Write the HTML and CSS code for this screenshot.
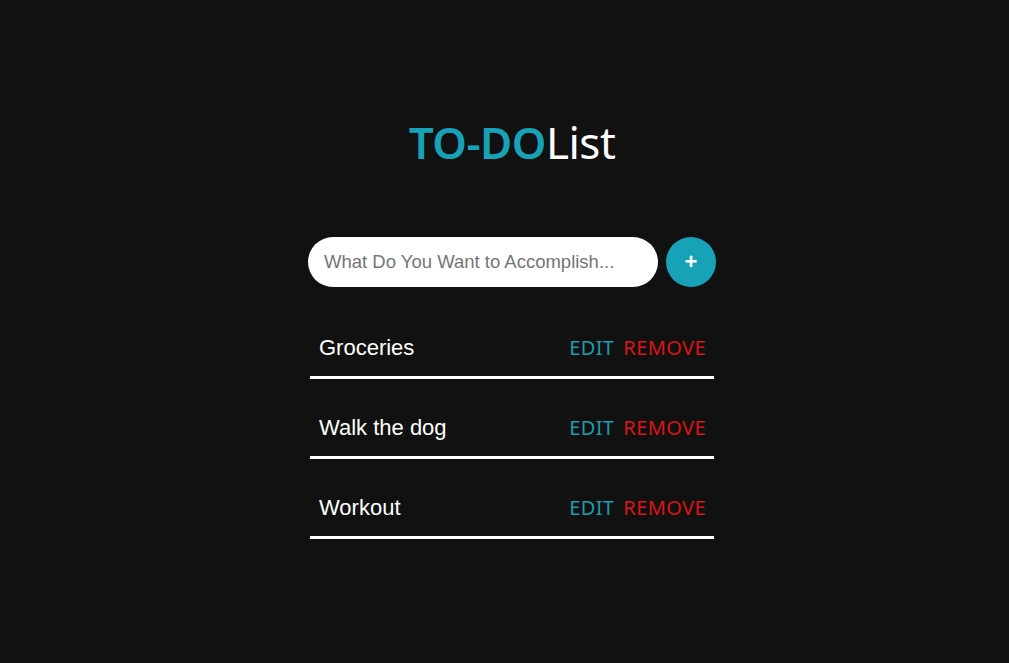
FILE: index.html
```html
<!DOCTYPE html>
<html>
<head>
<meta charset="utf-8">
<link rel="stylesheet" href="styles.css">
</head>
<body>
<div class="app">
  <h1 class="title"><span class="accent">TO-DO</span>List</h1>
  <form class="add-form">
    <input class="add-input" type="text" placeholder="What Do You Want to Accomplish...">
    <button class="add-btn" type="button">+</button>
  </form>
  <ul class="list">
    <li class="item"><span class="item-text">Groceries</span><span class="actions"><span class="edit">EDIT</span><span class="remove">REMOVE</span></span></li>
    <li class="item"><span class="item-text">Walk the dog</span><span class="actions"><span class="edit">EDIT</span><span class="remove">REMOVE</span></span></li>
    <li class="item"><span class="item-text">Workout</span><span class="actions"><span class="edit">EDIT</span><span class="remove">REMOVE</span></span></li>
  </ul>
</div>
</body>
</html>
```
FILE: styles.css
```css
html, body {
  margin: 0;
  background: #111111;
  height: 100%;
}
body {
  padding-left: 15px;
  box-sizing: border-box;
  font-family: "Noto Sans", "Open Sans", sans-serif;
}
.app {
  width: 408px;
  margin: 0 auto;
  display: flex;
  flex-direction: column;
  align-items: center;
}
.title {
  margin: 112px 0 0;
  font-size: 44px;
  font-weight: 400;
  line-height: 60px;
  color: #ffffff;
  letter-spacing: -0.5px;
}
.accent {
  color: #17a2b8;
  font-weight: 600;
}
.add-form {
  margin-top: 65px;
  display: flex;
  gap: 8px;
  width: 408px;
}
.add-input {
  width: 350px;
  height: 50px;
  box-sizing: border-box;
  border: none;
  border-radius: 25px;
  padding: 0 16px;
  font-family: "Liberation Sans", Arial, sans-serif;
  font-size: 18.5px;
  color: #333;
  background: #fff;
  outline: none;
}
.add-input::placeholder {
  color: #757575;
}
.add-btn {
  width: 50px;
  height: 50px;
  border-radius: 50%;
  border: none;
  background: #17a2b8;
  color: #fff;
  font-family: "Liberation Sans", Arial, sans-serif;
  font-size: 22px;
  font-weight: 700;
  padding: 0;
}
.list {
  list-style: none;
  margin: 33px 0 0;
  padding: 0;
  width: 404px;
  display: flex;
  flex-direction: column;
  gap: 21px;
}
.item {
  display: flex;
  justify-content: space-between;
  align-items: center;
  padding: 16px 8px 16px 9px;
  border-bottom: 3px solid #ffffff;
  line-height: 24px;
}
.item-text {
  font-family: "Liberation Sans", Arial, sans-serif;
  font-size: 22px;
  color: #ffffff;
}
.actions {
  display: flex;
  gap: 9px;
  font-size: 20px;
  font-weight: 400;
  letter-spacing: 0.4px;
}
.edit {
  color: #1b9cb0;
}
.remove {
  color: #dc1414;
}
```
